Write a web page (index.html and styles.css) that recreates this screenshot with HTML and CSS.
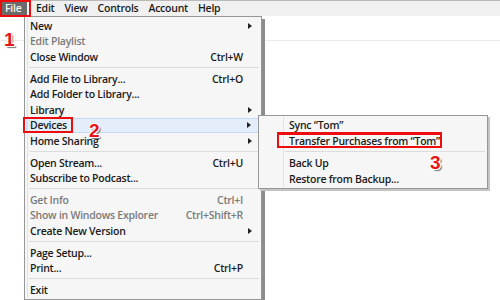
FILE: index.html
```html
<!DOCTYPE html>
<html>
<head>
    <link rel="stylesheet" href="styles.css">
</head>
<body>
    <div class="window">
        <div class="menubar">
            <span class="top-item active">File</span>
            <span class="top-item">Edit</span>
            <span class="top-item">View</span>
            <span class="top-item">Controls</span>
            <span class="top-item">Account</span>
            <span class="top-item">Help</span>
        </div>
        <div class="toolbar"></div>
        <div class="content"></div>

        <!-- File dropdown -->
        <div class="menu">
            <div class="row"><span class="label">New</span><span class="arrow"></span></div>
            <div class="row disabled"><span class="label">Edit Playlist</span></div>
            <div class="row"><span class="label">Close Window</span><span class="key">Ctrl+W</span></div>
            <div class="sep"></div>
            <div class="row"><span class="label">Add File to Library...</span><span class="key">Ctrl+O</span></div>
            <div class="row"><span class="label">Add Folder to Library...</span></div>
            <div class="row"><span class="label">Library</span><span class="arrow"></span></div>
            <div class="row hover"><span class="label">Devices</span><span class="arrow"></span></div>
            <div class="row"><span class="label">Home Sharing</span><span class="arrow"></span></div>
            <div class="sep"></div>
            <div class="row"><span class="label">Open Stream...</span><span class="key">Ctrl+U</span></div>
            <div class="row"><span class="label">Subscribe to Podcast...</span></div>
            <div class="sep"></div>
            <div class="row disabled"><span class="label">Get Info</span><span class="key">Ctrl+I</span></div>
            <div class="row disabled"><span class="label">Show in Windows Explorer</span><span class="key">Ctrl+Shift+R</span></div>
            <div class="row"><span class="label">Create New Version</span><span class="arrow"></span></div>
            <div class="sep"></div>
            <div class="row"><span class="label">Page Setup...</span></div>
            <div class="row"><span class="label">Print...</span><span class="key">Ctrl+P</span></div>
            <div class="sep"></div>
            <div class="row"><span class="label">Exit</span></div>
        </div>

        <!-- Devices submenu -->
        <div class="submenu">
            <div class="row"><span class="label">Sync &ldquo;Tom&rdquo;</span></div>
            <div class="row"><span class="label">Transfer Purchases from &ldquo;Tom&rdquo;</span></div>
            <div class="sep"></div>
            <div class="row"><span class="label">Back Up</span></div>
            <div class="row"><span class="label">Restore from Backup...</span></div>
        </div>

        <!-- tutorial marks -->
        <div class="mark mark-file"></div>
        <div class="mark mark-devices"></div>
        <div class="mark mark-transfer"></div>
        <span class="step step-1">1</span>
        <span class="step step-2">2</span>
        <span class="step step-3">3</span>
    </div>
</body>
</html>
```

FILE: styles.css
```css
body {
    margin: 0;
    font-family: "Open Sans", "Liberation Sans", sans-serif;
    font-size: 10.5px;
    letter-spacing: -0.25px;
    color: #1b1b1b;
}
.window {
    position: relative;
    width: 500px;
    height: 300px;
    overflow: hidden;
    background-color: #fff;
}
.menubar {
    display: flex;
    height: 16px;
    background-color: #f0f0f0;
    border-top: 1px solid #b9b9b9;
    box-sizing: border-box;
}
.top-item {
    padding: 0 5px 0 5px;
    line-height: 15px;
    font-weight: 600;
}
.top-item.active {
    background-color: #6b6b6b;
    color: #f4f4f4;
    width: 17px;
    margin-right: 4px;
}
.toolbar {
    height: 24px;
    border-bottom: 1px solid #ececec;
}
.content {
    height: 259px;
}

.menu {
    position: absolute;
    left: 24px;
    top: 16px;
    width: 236px;
    padding: 1px 0;
    background-color: #f6f6f6;
    border: 1px solid #979797;
    box-shadow: 3px 3px 0 #8c8c8c;
}
.menu::before {
    content: "";
    position: absolute;
    left: 2px;
    top: 1px;
    bottom: 1px;
    border-left: 1px solid #e2e2e2;
}
.row {
    display: flex;
    align-items: center;
    height: 15.6px;
    padding: 0 8px 0 5px;
    font-weight: 600;
    white-space: nowrap;
}
.row .label {
    flex: 1;
}
.row .key {
    margin-right: 10px;
}
.row .arrow {
    width: 0;
    height: 0;
    margin-right: 1px;
    border-left: 4px solid #222;
    border-top: 3px solid transparent;
    border-bottom: 3px solid transparent;
}
.row.disabled {
    color: #7a7a7a;
}
.row.hover {
    background-color: #e3eefa;
    border: 1px solid #c6dbf3;
    margin: 0 2px 0 1px;
    padding: 0 6px 0 3px;
    height: 13.6px;
}
.sep {
    height: 1px;
    margin: 2px 2px 3px 4px;
    background-color: #dcdcdc;
}

.submenu {
    position: absolute;
    left: 258px;
    top: 115px;
    width: 228px;
    padding: 1px 0;
    background-color: #f6f6f6;
    border: 1px solid #979797;
    box-shadow: 2px 2px 0 #c4c4c4;
}
.submenu::before {
    content: "";
    position: absolute;
    left: 24px;
    top: 1px;
    bottom: 1px;
    border-left: 1px solid #e2e2e2;
}
.submenu .row {
    height: 16px;
    padding-left: 30px;
}
.submenu .sep {
    margin: 2px 2px 3px 26px;
}

.mark {
    position: absolute;
    border: 2px solid #ee0d0d;
}
.mark-file {
    left: 0;
    top: 0;
    width: 27px;
    height: 13px;
}
.mark-devices {
    left: 23px;
    top: 117px;
    width: 46px;
    height: 12px;
}
.mark-transfer {
    left: 277px;
    top: 132px;
    width: 161px;
    height: 11px;
    border-width: 3px 2px 2px 2px;
}
.step {
    position: absolute;
    font-family: "Liberation Sans", Arial, sans-serif;
    font-weight: bold;
    font-size: 19px;
    letter-spacing: 0;
    color: #e8141a;
    text-shadow: -1px -1px 0 #fff, 1px -1px 0 #fff, -1px 1px 0 #fff, 1px 1px 0 #fff, 2px 2px 1px #777;
}
.step-1 {
    left: 4px;
    top: 29px;
}
.step-2 {
    left: 89px;
    top: 120px;
}
.step-3 {
    left: 430px;
    top: 152px;
}
```
